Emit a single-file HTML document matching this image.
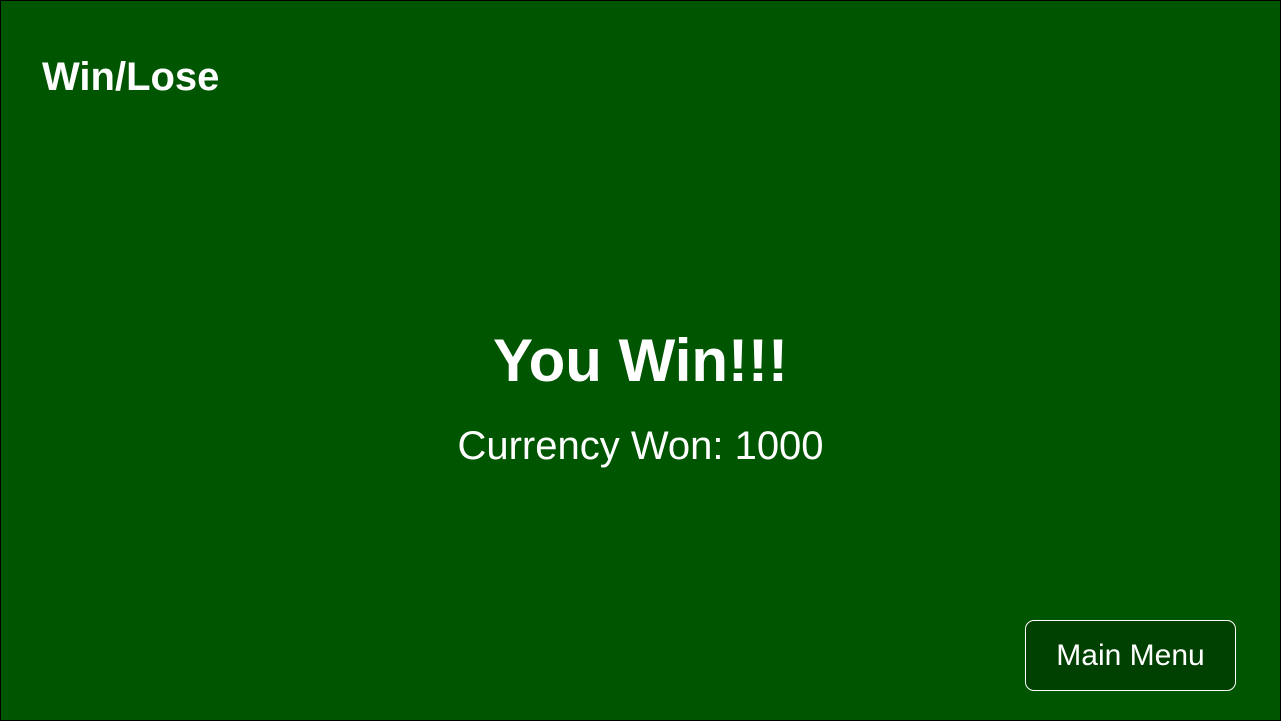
<!DOCTYPE html>
<html><head><style>
html,body{margin:0;padding:0}
body{width:1281px;height:721px;overflow:hidden;font-family:"Liberation Sans",sans-serif;color:#fff}
.page{position:absolute;left:0;top:0;width:1279px;height:719px;border:1px solid #000;background:#005500}
.t{position:absolute;left:41px;top:54px;font-size:40px;font-weight:bold;line-height:44px}
.w{position:absolute;left:0;width:1279px;text-align:center;top:324px;font-size:60px;font-weight:bold;line-height:72px}
.c{position:absolute;left:0;width:1279px;text-align:center;top:423px;font-size:40px;line-height:44px}
.b{position:absolute;left:1024px;top:619px;width:209px;height:69px;border:1px solid #fff;border-radius:9px;background:#004000;font-size:30px;text-align:center;line-height:69px}
</style></head><body><div class="page">
<div class="t">Win/Lose</div>
<div class="w">You Win!!!</div>
<div class="c">Currency Won: 1000</div>
<div class="b">Main Menu</div>
</div></body></html>
